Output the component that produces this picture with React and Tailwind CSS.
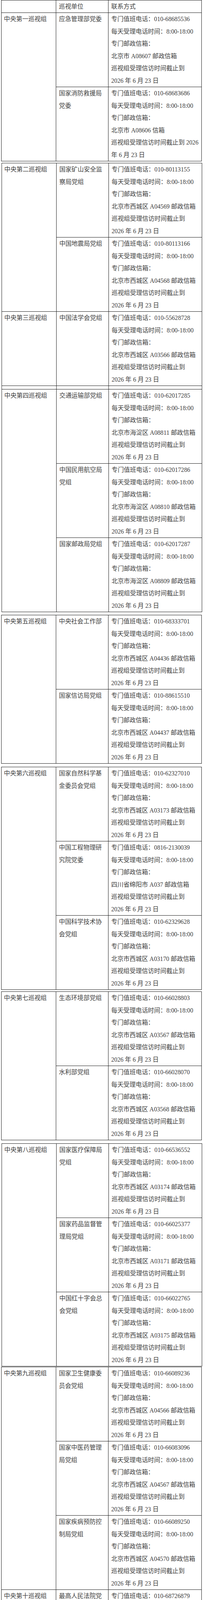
import React from "react";

const L2 = "每天受理电话时间：8:00-18:00";
const L3 = "专门邮政信箱：";
const L5 = "巡视组受理信访时间截止到";
const L6 = "2026 年 6 月 23 日";

const std = (phone, box) => [`专门值班电话：${phone}`, L2, L3, box, L5, L6];

const g = (name, rows) => ({ name, rows });
const r = (unit, lines) => ({ unit, lines });

const chunks = [
  {
    cls: "ml-[3px] mt-0 border",
    header: true,
    groups: [
      g("中央第一巡视组", [
        r(["应急管理部党委"], std("010-68685536", "北京市 A08607 邮政信箱")),
        r(["国家消防救援局", "党委"], [
          "专门值班电话：010-68683686",
          L2,
          L3,
          "北京市 A08606 信箱",
          "巡视组受理信访时间截止到 2026",
          "年 6 月 23 日",
        ]),
      ]),
    ],
  },
  {
    cls: "ml-[4px] mt-[4px] border",
    strip: true,
    groups: [
      g("中央第二巡视组", [
        r(["国家矿山安全监", "察局党组"], std("010-80113155", "北京市西城区 A04569 邮政信箱")),
        r(["中国地震局党组"], std("010-80113166", "北京市西城区 A04568 邮政信箱")),
      ]),
      g("中央第三巡视组", [
        r(["中国法学会党组"], std("010-55628728", "北京市西城区 A03566 邮政信箱")),
      ]),
    ],
  },
  {
    cls: "ml-[4px] mt-0 border-x border-b",
    groups: [
      g("中央第四巡视组", [
        r(["交通运输部党组"], std("010-62017285", "北京市海淀区 A08811 邮政信箱")),
        r(["中国民用航空局", "党组"], std("010-62017286", "北京市海淀区 A08810 邮政信箱")),
        r(["国家邮政局党组"], std("010-62017287", "北京市海淀区 A08809 邮政信箱")),
      ]),
    ],
  },
  {
    cls: "ml-[3px] mt-[7px] border",
    groups: [
      g("中央第五巡视组", [
        r(["中央社会工作部"], std("010-68333701", "北京市西城区 A04436 邮政信箱")),
        r(["国家信访局党组"], std("010-88615510", "北京市西城区 A04437 邮政信箱")),
      ]),
    ],
  },
  {
    cls: "ml-[3px] mt-[8px] border",
    groups: [
      g("中央第六巡视组", [
        r(["国家自然科学基", "金委员会党组"], std("010-62327010", "北京市西城区 A03173 邮政信箱")),
        r(["中国工程物理研", "究院党委"], std("0816-2130039", "四川省绵阳市 A037 邮政信箱")),
        r(["中国科学技术协", "会党组"], std("010-62329628", "北京市西城区 A03170 邮政信箱")),
      ]),
    ],
  },
  {
    cls: "ml-[3px] mt-[4px] border",
    groups: [
      g("中央第七巡视组", [
        r(["生态环境部党组"], std("010-66028803", "北京市西城区 A03567 邮政信箱")),
        r(["水利部党组"], std("010-66028070", "北京市西城区 A03568 邮政信箱")),
      ]),
    ],
  },
  {
    cls: "ml-[4px] mt-[8px] border",
    groups: [
      g("中央第八巡视组", [
        r(["国家医疗保障局", "党组"], std("010-66536552", "北京市西城区 A03174 邮政信箱")),
        r(["国家药品监督管", "理局党组"], std("010-66025377", "北京市西城区 A03171 邮政信箱")),
        r(["中国红十字会总", "会党组"], std("010-66022765", "北京市西城区 A03175 邮政信箱")),
      ]),
    ],
  },
  {
    cls: "ml-[3px] mt-[1px] border",
    groups: [
      g("中央第九巡视组", [
        r(["国家卫生健康委", "员会党组"], std("010-66089236", "北京市西城区 A04566 邮政信箱")),
        r(["国家中医药管理", "局党组"], std("010-66083096", "北京市西城区 A04567 邮政信箱")),
        r(["国家疾病预防控", "制局党组"], std("010-66089250", "北京市西城区 A04570 邮政信箱")),
      ]),
      g("中央第十巡视组", [
        r(["最高人民法院党", "组"], [
          "专门值班电话：010-68726879",
          L2,
          "专门邮政信箱：北京市东城区",
          "A00615 邮政信箱",
          L5,
          L6,
        ]),
      ]),
    ],
  },
  {
    cls: "ml-[3px] mt-[7px] border",
    groups: [
      g("中央第十一巡视组", [
        r(["人力资源和社会", "保障部党组"], std("010-66026517", "北京市西城区 A03172 邮政信箱")),
        r(["退役军人事务部", "党组"], std("010-66025230", "北京市西城区 A03176 邮政信箱")),
      ]),
      g("中央第十二巡视组", [
        r(["公安部党委"], std("010-68516915", "北京市西城区 A04565 邮政信箱")),
      ]),
    ],
  },
  {
    cls: "ml-[2px] mt-[3px] border",
    groups: [
      g("中央第十三巡视组", [
        r(["中国科学院党组"], std("010-58926856", "北京市西城区 A03417 邮政信箱")),
        r(["中国工程院党组"], std("010-58926855", "北京市西城区 A03416 邮政信箱")),
      ]),
      g("中央第十四巡视组", [
        r(["中国气象局党组"], std("010-62180186", "北京市海淀区 A08605 邮政信箱")),
        r(["中国农业科学院", "党组"], std("010-68898900", "北京市海淀区 A08604 邮政信箱")),
      ]),
    ],
  },
  {
    cls: "ml-[3px] mt-[7px] border",
    groups: [
      g("中央第十五巡视组", [
        r(["民政部党组"], std("010-65289002", "北京市东城区 A00617 邮政信箱")),
        r(["中国老龄协会"], std("010-65289829", "北京市东城区 A00618 邮政信箱")),
      ]),
    ],
  },
];

function Line({ children }) {
  return <div className="h-[31.5px] overflow-visible whitespace-nowrap">{children}</div>;
}

function Group({ group, first }) {
  return (
    <div className={"flex " + (first ? "" : "border-t border-[#1c1c1c]")}>
      <div className="w-[140px] shrink-0 border-r border-[#1c1c1c] pl-[6px]">
        <Line>{group.name}</Line>
      </div>
      <div className="flex-1 flex flex-col">
        {group.rows.map((row, i) => (
          <div key={i} className={"flex " + (i > 0 ? "border-t border-[#1c1c1c]" : "")}>
            <div className="w-[134px] shrink-0 border-r border-[#1c1c1c] pl-[7px]">
              {row.unit.map((l, j) => (
                <Line key={j}>{l}</Line>
              ))}
            </div>
            <div className="flex-1 pl-[7px]">
              {row.lines.map((l, j) => (
                <Line key={j}>{l}</Line>
              ))}
            </div>
          </div>
        ))}
      </div>
    </div>
  );
}

export default function App() {
  return (
    <div
      className="bg-white w-[533px] h-[5992px] overflow-hidden text-[15.7px] leading-[31.5px] text-[#3d3d3d]"
      style={{ fontFamily: '"Liberation Serif", "Noto Sans CJK SC", serif' }}
    >
      {chunks.map((c, ci) => (
        <div key={ci} className={c.cls + " w-[514px] border-[#1c1c1c]"}>
          {c.header && (
            <div className="flex h-[31px] leading-[31px]">
              <div className="w-[140px] shrink-0 border-r border-[#1c1c1c]"></div>
              <div className="w-[134px] shrink-0 border-r border-[#1c1c1c] pl-[7px] whitespace-nowrap">巡视单位</div>
              <div className="flex-1 pl-[7px] whitespace-nowrap">联系方式</div>
            </div>
          )}
          {c.groups.map((gr, gi) => (
            <Group key={gi} group={gr} first={!c.header && gi === 0} />
          ))}
          {c.strip && (
            <div className="flex h-[9px] border-t border-[#1c1c1c]">
              <div className="w-[140px] shrink-0 border-r border-[#1c1c1c]"></div>
              <div className="w-[134px] shrink-0 border-r border-[#1c1c1c]"></div>
              <div className="flex-1"></div>
            </div>
          )}
        </div>
      ))}
    </div>
  );
}
